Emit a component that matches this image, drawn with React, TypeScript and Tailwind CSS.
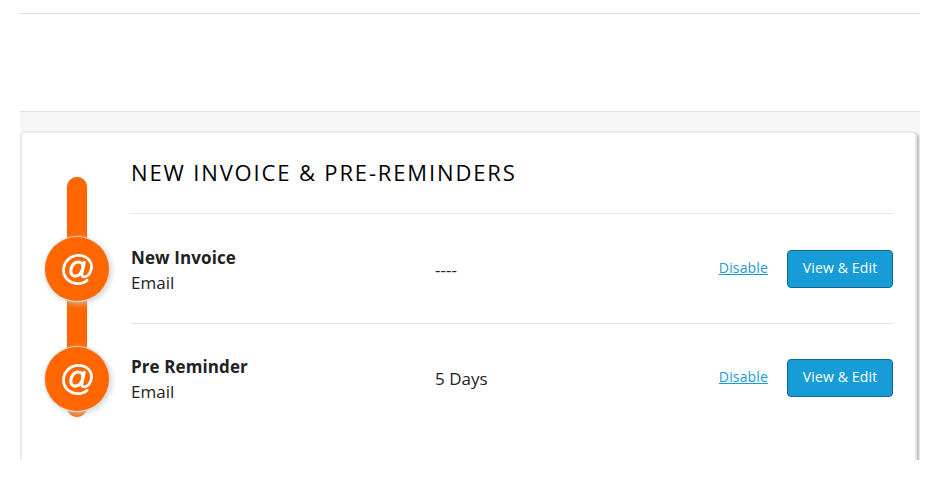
const reminders = [
  { id: "new-invoice", name: "New Invoice", channel: "Email", timing: "----" },
  { id: "pre-reminder", name: "Pre Reminder", channel: "Email", timing: "5 Days" },
];

function AtIcon() {
  return (
    <svg
      viewBox="0 0 30 30"
      className="size-[31px]"
      fill="none"
      stroke="currentColor"
      strokeLinecap="round"
      strokeLinejoin="round"
    >
      <path
        strokeWidth="2.7"
        d="M24.3 25.3C22.1 27.5 19 28.6 15.5 28.6C7.6 28.6 1.5 23.2 1.5 15.4C1.5 7.6 7.8 1.4 16 1.4C23.4 1.4 28.6 6.2 28.6 12.4C28.6 17.9 24.8 22.2 21.5 22.2C19.4 22.2 18.9 20.8 19.3 18.8L21.7 8"
      />
      <path
        strokeWidth="3"
        d="M20.2 12.2C20.2 16.8 17 21.4 13 21.4C10.2 21.4 8.5 19.3 8.5 16.4C8.5 12 11.6 7.8 15.7 7.8C18.5 7.8 20.2 9.5 20.2 12.2Z"
      />
    </svg>
  );
}

export default function App() {
  return (
    <div className="h-[491px] overflow-hidden bg-white px-5 pt-[13px] font-['Open_Sans','Noto_Sans',sans-serif] text-[#222]">
      <div className="h-[98px] border-t border-[#dedede]" />

      <div className="h-[349px] overflow-hidden border-t border-[#e2e2e2] bg-[#f6f6f6] pt-[19px] pr-[3px]">
        <section className="relative h-[360px] rounded-[5px] border-2 border-[#e9e9e9] bg-white pr-[22px] pl-px shadow-[2px_2px_2px_#bbb]">
          {/* Timeline bar behind the icons */}
          <div className="absolute left-[45px] top-11 h-[240px] w-5 rounded-full bg-[#ff6600] shadow-[0_0_1px_#999]" />

          <header className="ml-[108px] h-[80px] pt-[23px]">
            <h2 className="whitespace-nowrap text-[22px] font-normal leading-[33px] tracking-[1.85px] text-black">
              NEW INVOICE &amp; PRE-REMINDERS
            </h2>
          </header>

          {reminders.map((item) => (
            <div key={item.id} className="relative flex h-[110px] pl-[22px] last:h-[108px]">
              <div className="mt-6 flex size-16 shrink-0 items-center justify-center rounded-full bg-[#ff6600] text-white shadow-[0_0_1px_1px_#ddd,2px_2px_6px_#ccc]">
                <AtIcon />
              </div>

              <div className="ml-[21px] flex h-full flex-1 items-center border-t border-[#e6e6e6]">
                <div className="w-[305px] pl-px pt-[2px] text-[17px] leading-[25px]">
                  <div className="font-bold tracking-[0.1px]">{item.name}</div>
                  <div>{item.channel}</div>
                </div>
                <div className="flex-1 pt-[2px] text-[17px]">{item.timing}</div>
                <a href="#" className="mr-[19px] pb-[3px] text-[14px] tracking-[0.15px] text-[#189cd8] underline">
                  Disable
                </a>
                <button className="h-[38px] w-[106px] rounded-[4px] border border-[#116a93] bg-[#189cd8] pb-[3px] text-[14px] tracking-[0.15px] text-white">
                  View &amp; Edit
                </button>
              </div>
            </div>
          ))}
        </section>
      </div>
    </div>
  );
}
